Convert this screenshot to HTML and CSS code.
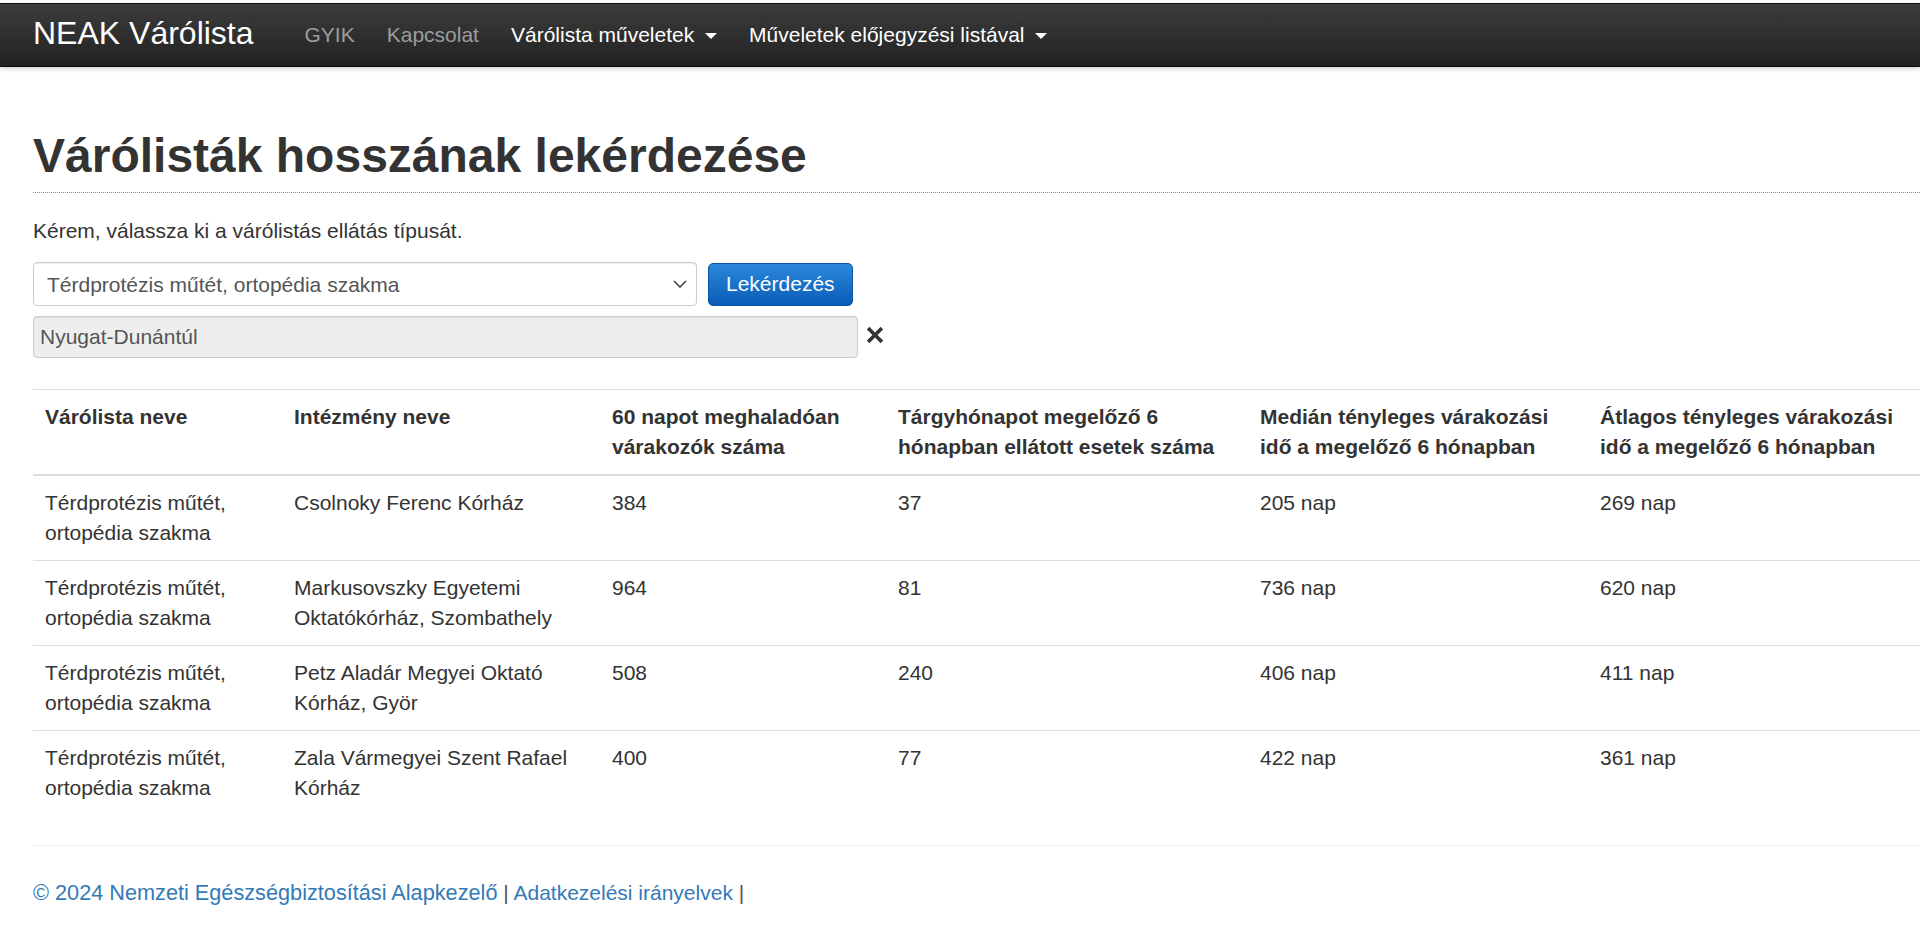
FILE: index.html
```html
<!DOCTYPE html>
<html lang="hu">
<head>
    <meta charset="UTF-8">
    <meta name="viewport" content="width=device-width, initial-scale=1.0">
    <title>NEAK Várólista</title>
    <link rel="stylesheet" href="styles.css">
</head>
<body>
    <nav class="navbar">
        <a class="brand" href="#">NEAK Várólista</a>
        <ul class="nav">
            <li><a href="#">GYIK</a></li>
            <li><a href="#">Kapcsolat</a></li>
            <li><a class="open" href="#">Várólista műveletek <span class="caret"></span></a></li>
            <li><a class="open" href="#">Műveletek előjegyzési listával <span class="caret"></span></a></li>
        </ul>
    </nav>

    <div class="container">
        <div class="page-header">
            <h1>Várólisták hosszának lekérdezése</h1>
        </div>

        <p class="lead-text">Kérem, válassza ki a várólistás ellátás típusát.</p>

        <form class="query-form">
            <div class="form-row">
                <div class="select-wrap">
                    <select class="form-control" name="tipus">
                        <option>Térdprotézis műtét, ortopédia szakma</option>
                        <option>Csípőprotézis műtét, ortopédia szakma</option>
                        <option>Szürkehályog műtét, szemészet szakma</option>
                    </select>
                    <svg class="chevron" width="14" height="8" viewBox="0 0 14 8">
                        <polyline points="1,1 7,7 13,1" fill="none" stroke="#444" stroke-width="1.6"/>
                    </svg>
                </div>
                <button type="button" class="btn-primary">Lekérdezés</button>
            </div>
            <div class="form-row region-row">
                <input class="form-control readonly" type="text" value="Nyugat-Dunántúl" readonly>
                <a href="#" class="remove" title="Törlés">
                    <svg width="18" height="18" viewBox="0 0 17 17">
                        <path d="M3.2 0.8 L8.5 6.1 L13.8 0.8 L16.2 3.2 L10.9 8.5 L16.2 13.8 L13.8 16.2 L8.5 10.9 L3.2 16.2 L0.8 13.8 L6.1 8.5 L0.8 3.2 Z" fill="#333"/>
                    </svg>
                </a>
            </div>
        </form>

        <table class="table">
            <colgroup>
                <col style="width: 249px">
                <col style="width: 318px">
                <col style="width: 286px">
                <col style="width: 362px">
                <col style="width: 340px">
                <col>
            </colgroup>
            <thead>
                <tr>
                    <th>Várólista neve</th>
                    <th>Intézmény neve</th>
                    <th>60 napot meghaladóan várakozók száma</th>
                    <th>Tárgyhónapot megelőző 6 hónapban ellátott esetek száma</th>
                    <th>Medián tényleges várakozási idő a megelőző 6 hónapban</th>
                    <th>Átlagos tényleges várakozási idő a megelőző 6 hónapban</th>
                </tr>
            </thead>
            <tbody>
                <tr>
                    <td>Térdprotézis műtét, ortopédia szakma</td>
                    <td>Csolnoky Ferenc Kórház</td>
                    <td>384</td>
                    <td>37</td>
                    <td>205 nap</td>
                    <td>269 nap</td>
                </tr>
                <tr>
                    <td>Térdprotézis műtét, ortopédia szakma</td>
                    <td>Markusovszky Egyetemi Oktatókórház, Szombathely</td>
                    <td>964</td>
                    <td>81</td>
                    <td>736 nap</td>
                    <td>620 nap</td>
                </tr>
                <tr>
                    <td>Térdprotézis műtét, ortopédia szakma</td>
                    <td>Petz Aladár Megyei Oktató Kórház, Györ</td>
                    <td>508</td>
                    <td>240</td>
                    <td>406 nap</td>
                    <td>411 nap</td>
                </tr>
                <tr>
                    <td>Térdprotézis műtét, ortopédia szakma</td>
                    <td>Zala Vármegyei Szent Rafael Kórház</td>
                    <td>400</td>
                    <td>77</td>
                    <td>422 nap</td>
                    <td>361 nap</td>
                </tr>
            </tbody>
        </table>

        <footer class="footer">
            <p>
                <a class="copy" href="#">© 2024 Nemzeti Egészségbiztosítási Alapkezelő</a>
                <span class="sep">|</span>
                <a href="#">Adatkezelési irányelvek</a>
                <span class="sep">|</span>
            </p>
        </footer>
    </div>
</body>
</html>
```

FILE: styles.css
```css
html, body {
    overflow-x: hidden;
}
body {
    margin: 0;
    font-family: "Liberation Sans", Arial, sans-serif;
    font-size: 21px;
    line-height: 30px;
    color: #333;
    background-color: #fff;
}
a {
    color: #337ab7;
    text-decoration: none;
}

/* navbar */
.navbar {
    display: flex;
    align-items: center;
    height: 62px;
    margin-top: 3px;
    padding-left: 33px;
    background-image: linear-gradient(to bottom, #3c3c3c 0, #222 100%);
    border-top: 1px solid #111;
    border-bottom: 1px solid #080808;
    box-shadow: 0 2px 5px rgba(0, 0, 0, 0.18);
}
.brand {
    color: #fff;
    font-size: 32px;
    line-height: 40px;
    margin-right: 35px;
    padding-bottom: 5px;
}
.nav {
    display: flex;
    list-style: none;
    margin: 0;
    padding: 0;
}
.nav a {
    display: block;
    padding: 0 16px;
    color: #9d9d9d;
    line-height: 62px;
}
.nav a.open {
    color: #fff;
}
.caret {
    display: inline-block;
    width: 0;
    height: 0;
    margin-left: 5px;
    vertical-align: middle;
    border-top: 6px solid;
    border-right: 6px solid transparent;
    border-left: 6px solid transparent;
}

/* content */
.container {
    padding-left: 33px;
}
.page-header {
    margin-top: 62px;
    padding-bottom: 10px;
    border-bottom: 1px dotted #8c8c8c;
}
h1 {
    margin: 0;
    font-size: 48px;
    line-height: 53px;
    font-weight: bold;
}
.lead-text {
    margin: 23px 0 16px;
}

.form-row {
    display: flex;
    align-items: center;
    gap: 11px;
}
.select-wrap {
    position: relative;
    width: 664px;
}
.form-control {
    box-sizing: border-box;
    width: 100%;
    height: 44px;
    padding: 0 12px;
    font-family: inherit;
    font-size: 21px;
    color: #555;
    background-color: #fff;
    border: 1px solid #ccc;
    border-radius: 4px;
    box-shadow: inset 0 1px 1px rgba(0, 0, 0, 0.075);
}
select.form-control {
    -webkit-appearance: none;
    appearance: none;
    padding-left: 13px;
}
.chevron {
    position: absolute;
    right: 10px;
    top: 18px;
    pointer-events: none;
}
.btn-primary {
    height: 43px;
    padding: 0 17px;
    font-family: inherit;
    font-size: 21px;
    color: #fff;
    background-image: linear-gradient(to bottom, #2a88dc 0, #0a5cb6 100%);
    border: 1px solid #0a56a8;
    border-radius: 5px;
    cursor: pointer;
}
.region-row {
    margin-top: 10px;
    gap: 8px;
}
.form-control.readonly {
    width: 825px;
    height: 42px;
    padding-left: 6px;
    background-color: #eee;
}
.remove {
    display: flex;
    margin-top: -5px;
}

/* table */
.table {
    width: 1887px;
    margin-top: 31px;
    margin-bottom: 30px;
    border-collapse: collapse;
    table-layout: fixed;
}
.table th,
.table td {
    padding: 12px;
    text-align: left;
    vertical-align: top;
    border-top: 1px solid #ddd;
}
.table th {
    border-bottom: 2px solid #ddd;
}
.table tbody tr:first-child td {
    border-top: 0;
}

/* footer */
.footer {
    border-top: 1px solid #eee;
    padding-top: 32px;
}
.footer p {
    margin: 0;
}
.footer .copy {
    font-size: 21.7px;
}
.sep {
    color: #555;
}
```
